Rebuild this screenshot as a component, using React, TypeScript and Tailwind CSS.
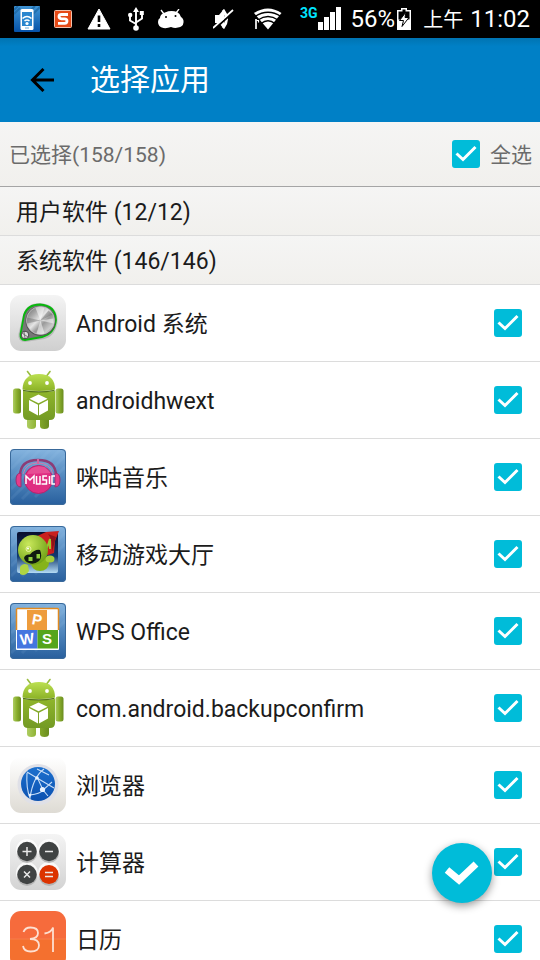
import React, { useState } from "react";

const FONT = "font-['Roboto','Noto_Sans_CJK_SC',sans-serif]";

function CheckBox({ checked, onChange, label, id }: { checked: boolean; onChange: () => void; label?: string; id: string }) {
  return (
    <span className="relative block h-7 w-7 shrink-0">
      <input
        id={id}
        type="checkbox"
        aria-label={label}
        checked={checked}
        onChange={onChange}
        className="block h-7 w-7 appearance-none rounded-[3px] border-2 border-[#757575] checked:border-[#00bcd9] checked:bg-[#00bcd9]"
      />
      {checked && (
        <svg viewBox="0 0 28 28" className="pointer-events-none absolute inset-0 h-7 w-7" fill="none" stroke="#fff" strokeWidth="3">
          <path d="M4.5 13.5 11 19.5 23.5 7" />
        </svg>
      )}
    </span>
  );
}

function StatusBar() {
  return (
    <div className="flex h-[38px] shrink-0 items-center bg-black pl-[14px] pr-[10px] text-white">
      <svg className="h-[26px] w-[26px]" viewBox="0 0 26 26">
        <defs>
          <linearGradient id="sb" x1="0" y1="0" x2="0" y2="1">
            <stop offset="0" stopColor="#3f94d4" />
            <stop offset="1" stopColor="#0552a8" />
          </linearGradient>
        </defs>
        <rect width="26" height="26" rx="1" fill="url(#sb)" />
        <path d="M0 8 6 2M0 4 4 0M16 5 21 0M19 8 26 1" stroke="#236fad" strokeWidth="2" />
        <rect x="6.500" y="3" width="13" height="21" rx="1.500" fill="#fff" />
        <rect x="8" y="6" width="10" height="14" fill="#2a86ce" />
        <path d="M8.500 12.500q4.500-4 9 0M10.500 15q2.500-2 5 0" fill="none" stroke="#fff" strokeWidth="1.600" />
        <circle cx="13" cy="17.500" r="1.600" fill="#fff" />
        <path d="M11 22h4" stroke="#6ba9d8" />
      </svg>
      <svg className="ml-[14px] h-[18px] w-[18px]" viewBox="0 0 18 18">
        <rect x=".5" y=".5" width="17" height="17" rx="1" fill="#e64a16" stroke="#f1c1ad" />
        <path d="M14 4.500H7.500Q5 4.500 5 6.500T7.500 8.800h3Q13 8.800 13 11T10.500 13.300H4" fill="none" stroke="#fff" strokeWidth="2.800" />
      </svg>
      <svg className="ml-[15px] h-[22px] w-[24px]" viewBox="0 0 24 22">
        <path d="M12 1 23 21H1Z" fill="#fff" stroke="#fff" strokeLinejoin="round" />
        <path d="M12 7.500v6.500M12 16v3" stroke="#000" strokeWidth="2.600" />
      </svg>
      <svg className="ml-[17px] h-[24px] w-[16px]" viewBox="0 0 16 24" fill="#fff">
        <path d="M8 4v16M8 17 2 13.500V9M8 15.500l6-4V7" fill="none" stroke="#fff" strokeWidth="1.900" />
        <path d="m8 0 3 5H5ZM11.800 4h4v4h-4Z" />
        <circle cx="2.200" cy="8" r="2.200" />
        <circle cx="8" cy="21" r="2.800" />
      </svg>
      <svg className="ml-[14px] h-[20px] w-[26px]" viewBox="0 0 26 20">
        <path d="M2 9Q2 5 7 3.500Q13 1 19 3Q22 4.500 23 8Q26 10 25.500 13.500Q25 18 20 18.500Q17 19.500 13 18Q9 19.500 5.500 19Q0 18 0 13Q0 10 2 9Z" fill="#fff" />
        <path d="m3 1 3 4M21 0l-3 4" stroke="#fff" strokeWidth="1.300" />
        <circle cx="8" cy="8" r="1" />
        <circle cx="17.500" cy="7" r="1" />
      </svg>
      <svg className="ml-[29px] h-[22px] w-[22px]" viewBox="0 0 22 22">
        <path d="M2 7h4l5-6v20l-5-6H2Z" fill="#fff" />
        <path d="M10 2q7 9 0 18" fill="none" stroke="#fff" strokeWidth="3" />
        <path d="M1 21.500 21 3.500" stroke="#000" strokeWidth="2" />
        <path d="M0 20 20 2" stroke="#fff" strokeWidth="1.700" />
      </svg>
      <svg className="ml-[19px] h-[22px] w-[28px]" viewBox="0 0 28 22" fill="none">
        <path d="M0 5Q14-4 27.500 5L14 21.500Z" fill="#fff" />
        <path d="M1 8.500Q14 0 27 8.500M4 12Q14 5 24 12M7 15.500Q14 10 21 15.500" stroke="#000" strokeWidth="1.400" />
        <path d="M2 11v10" stroke="#fff" strokeWidth="1.700" />
        <path d="M2.500 12.500h2v2" stroke="#fff" strokeWidth="1.200" />
      </svg>
      <span className="ml-[18px] self-start pt-[5px] text-sm leading-4 font-bold text-[#00e5ff]">3G</span>
      <svg className="h-[24px] w-[24px]" viewBox="0 0 24 24" fill="#fff">
        <path d="M0 15h5v8H0ZM6 10h5v13H6ZM12 5h5v18h-5ZM18 0h5v23h-5Z" />
      </svg>
      <span className="ml-[9px] text-2xl">56%</span>
      <svg className="ml-[2px] h-[22px] w-[14px]" viewBox="0 0 14 22">
        <path d="M4 0h6v2h4v20H0V2h4Z" fill="#fff" />
        <path d="M5.500 1.500h3v2h4v8H1.500v-8h4Z" fill="#000" />
        <path d="M9 4 2.500 12.500h4L5 18.500l7-9H8Z" fill="#fff" stroke="#000" strokeWidth="1" />
      </svg>
      <span className="ml-auto flex items-center gap-[7px]">
        <span className="pt-[2px] text-xl">上午</span>
        <span className="text-2xl">11:02</span>
      </span>
    </div>
  );
}

function SystemIcon() {
  return (
    <svg viewBox="0 0 56 56" className="h-14 w-14">
      <defs>
        <linearGradient id="sys" x1="0" y1="0" x2="0" y2="1">
          <stop offset="0" stopColor="#f4f4f4" />
          <stop offset="1" stopColor="#cfcfcf" />
        </linearGradient>
        <linearGradient id="dial" x1="0" y1="0" x2="1" y2="1">
          <stop offset="0" stopColor="#666" />
          <stop offset=".25" stopColor="#a5a5a5" />
          <stop offset=".45" stopColor="#e5e5e5" />
          <stop offset=".6" stopColor="#999" />
          <stop offset=".8" stopColor="#ccc" />
          <stop offset="1" stopColor="#555" />
        </linearGradient>
      </defs>
      <rect width="56" height="56" rx="11" fill="url(#sys)" />
      <path d="M14.500 20Q18 9.500 30 9.500Q47 11 46 28Q43 42 31 43L15 45.500Q9 45.500 10 39Z" fill="#777" stroke="#999" strokeWidth="3" opacity=".5" />
      <path d="M14 20Q17.500 9.500 30 9.500Q45.500 10.500 46 25Q44.500 39 32 42L15 45Q10 45 10.500 39Z" fill="#777" stroke="#08b80d" strokeWidth="1.800" />
      <circle cx="30.500" cy="26" r="15" fill="#555" />
      <circle cx="30.500" cy="25.500" r="14" fill="url(#dial)" stroke="#ccc" strokeWidth=".7" />
      <path d="m30.500 25.500-5-12.500q5-2 9 0ZM30.500 25.500l13-2v5ZM30.500 25.500l-4 13q4 1 8 0Z" fill="#fff" opacity=".5" />
      <path d="m30.500 25.500-13.500-3v6ZM30.500 25.500l8-10 4 4Z" fill="#555" opacity=".35" />
      <circle cx="15" cy="40" r="3.800" fill="#ddd" stroke="#444" />
      <path d="m12 38 6 4m-4-5 1 6" stroke="#777" />
    </svg>
  );
}

function DroidIcon() {
  return (
    <svg viewBox="0 0 56 62" className="h-[62px] w-14">
      <defs>
        <linearGradient id="droidHead" x1="0" y1="0" x2="0" y2="1">
          <stop offset="0" stopColor="#bce052" />
          <stop offset="1" stopColor="#8bb226" />
        </linearGradient>
        <linearGradient id="droidBody" x1="0" y1="0" x2="0" y2="1">
          <stop offset="0" stopColor="#8fb52b" />
          <stop offset="1" stopColor="#739a24" />
        </linearGradient>
        <linearGradient id="droidArm" x1="0" y1="0" x2="1" y2="0">
          <stop offset="0" stopColor="#aecd62" />
          <stop offset=".5" stopColor="#88ad2b" />
          <stop offset="1" stopColor="#6a8c20" />
        </linearGradient>
      </defs>
      <path d="m17.500 2.500 4.500 6M40 2.500l-4.500 6" stroke="#99bd3e" strokeWidth="1.600" strokeLinecap="round" />
      <path d="M17 46h9v11q0 3-4.500 3T17 57ZM30 46h9v11q0 3-4.500 3T30 57Z" fill="url(#droidArm)" />
      <rect x="3" y="19.500" width="8" height="25" rx="2.500" fill="url(#droidArm)" />
      <rect x="45.500" y="19.500" width="8" height="25" rx="2.500" fill="url(#droidArm)" />
      <path d="M13 22q16 2 32 0v24q0 5-5 5H18q-5 0-5-5Z" fill="url(#droidBody)" />
      <path d="M12.500 20.500Q13 5 29 5t16 15.500q-16 3-32.500 0Z" fill="url(#droidHead)" />
      <path d="M13 20.700q16 3.300 31.500 0v1.300q-16 3-31.500 0Z" fill="#55751a" />
      <circle cx="20" cy="14" r="1.900" fill="#fff" />
      <circle cx="37" cy="14" r="1.900" fill="#fff" />
      <path d="m28.500 25.500 9 4.200-9 4.600-9-4.600ZM19 31l9 4.700v10.800l-9-5ZM38 31l-9 4.700v10.800l9-5Z" fill="#fff" />
    </svg>
  );
}

function BlueTile({ children }: { children: React.ReactNode }) {
  return (
    <svg viewBox="0 0 56 56" className="h-14 w-14">
      <defs>
        <linearGradient id="tile" x1="0" y1="0" x2="0" y2="1">
          <stop offset="0" stopColor="#85b4df" />
          <stop offset=".5" stopColor="#5288be" />
          <stop offset="1" stopColor="#285f9d" />
        </linearGradient>
      </defs>
      <rect width="56" height="56" rx="4" fill="url(#tile)" />
      <path d="M1 20 20 1M1 30 30 1M1 40 40 1M1 50 50 1M12 50 55 7M25 48 55 18" stroke="#a9ceed" strokeWidth="3" opacity=".1" />
      <rect x=".5" y=".5" width="55" height="55" rx="3.500" fill="none" stroke="#39699a" />
      {children}
    </svg>
  );
}

function MusicIcon() {
  return (
    <BlueTile>
      <path d="M10 27Q10 11 28 11t18 16" fill="none" stroke="#8c3c76" strokeWidth="2.500" />
      <path d="M13 25Q16 14 28 14t15 11" fill="none" stroke="#cf7aac" strokeWidth="1" />
      <path d="M28 10v5" stroke="#d5659f" strokeWidth="2" />
      <circle cx="28.500" cy="30.500" r="14" fill="#df2e82" stroke="#b12470" />
      <path d="M17 25q5-10 18-7l6 6Z" fill="#ec64a2" opacity=".6" />
      <path d="M11 24v14q-5 0-5-7t5-7ZM45 24v14q5 0 5-7t-5-7Z" fill="#e53c8a" stroke="#a32c70" />
      <path d="M16 35v-8l4 4 4-4v8M26.500 27v8H30v-8M37 27h-4v4h3.500v4h-5M39.500 27v8M45 27h-3v8h3" fill="none" stroke="#fff" strokeWidth="1.500" />
    </BlueTile>
  );
}

function GameIcon() {
  return (
    <BlueTile>
      <defs>
        <linearGradient id="night" x1="0" y1="0" x2="0" y2="1">
          <stop offset="0" stopColor="#080e2d" />
          <stop offset=".6" stopColor="#123a70" />
          <stop offset="1" stopColor="#b4dcf5" />
        </linearGradient>
        <radialGradient id="alien" cx=".35" cy=".3" r=".8">
          <stop offset="0" stopColor="#c9e85b" />
          <stop offset="1" stopColor="#6a9d12" />
        </radialGradient>
      </defs>
      <rect x="7" y="6" width="41" height="41" rx="2" fill="url(#night)" />
      <path d="m25 11 11-5 13-1-4 10-1 12-9 3-3-12Z" fill="#c9201e" />
      <path d="M38 8q5 6 4 18l4-15Z" fill="#8d1318" />
      <path d="m37 22 3-9v10" fill="none" stroke="#9bc831" strokeWidth="2" />
      <ellipse cx="30" cy="37" rx="9" ry="8" fill="#86b31b" />
      <ellipse cx="40" cy="33" rx="4.500" ry="3.500" fill="#a5ce3a" />
      <circle cx="23" cy="24" r="15" fill="url(#alien)" />
      <path d="M14 32q1-4 6-3.500 5-5.500 10-4.500 3 7-1 11-5 4-10 2-4-1-5-5Z" fill="#101b10" />
      <path d="M18.500 31h4v4h-4ZM26.500 28h3.500v4.500h-3.500Z" fill="#8fd03e" />
      <circle cx="18.500" cy="23" r="2.500" fill="none" stroke="#e9f5a4" />
      <circle cx="18" cy="22.500" r="1" fill="#fff" />
      <path d="M10 41q3-5 8-2l1 6q-4 6-9 3Z" fill="#afd543" />
    </BlueTile>
  );
}

function WpsIcon() {
  return (
    <BlueTile>
      <rect x="6" y="5" width="43" height="42" rx="1" fill="#fff" />
      <path d="M6.500 27V6.500q0-1 1-1h40q1 0 1 1V27" fill="none" stroke="#e18a20" strokeWidth="1.500" />
      <rect x="17" y="7" width="20" height="20" fill="#ee9c3c" />
      <rect x="7" y="27" width="20.500" height="18.500" fill="#4476df" />
      <rect x="27.500" y="27" width="20.500" height="18.500" fill="#55a51c" />
      <g fill="#fff" fontFamily="Liberation Sans, sans-serif" fontWeight="bold" fontSize="15" textAnchor="middle">
        <text x="27" y="22" transform="rotate(10 27 17)">P</text>
        <text x="17" y="41" transform="rotate(-8 17 36)">W</text>
        <text x="37" y="41">S</text>
      </g>
    </BlueTile>
  );
}

function BrowserIcon() {
  return (
    <svg viewBox="0 0 56 56" className="h-14 w-14">
      <defs>
        <linearGradient id="brBase" x1="0" y1="0" x2="0" y2="1">
          <stop offset="0" stopColor="#fff" />
          <stop offset="1" stopColor="#dedbd4" />
        </linearGradient>
        <linearGradient id="globe" x1="0" y1="0" x2="0" y2="1">
          <stop offset="0" stopColor="#1c70ce" />
          <stop offset="1" stopColor="#0b51b0" />
        </linearGradient>
      </defs>
      <rect width="56" height="56" rx="11" fill="url(#brBase)" />
      <circle cx="28" cy="27.500" r="20.500" fill="#dfe0e7" />
      <circle cx="28" cy="27" r="17" fill="url(#globe)" />
      <path d="M17 15 27 21 44 31M34 12Q23 20 20 41Q16 31 17 16M20 38q10-1 13-5l9-8M28 22l5 11 5 6M27 12l12 6" fill="none" stroke="#c7ddf7" strokeWidth="1.100" />
      <circle cx="32.500" cy="32.500" r="2.600" fill="#e8f2ff" />
      <circle cx="27" cy="21" r="1.800" fill="#e8f2ff" />
      <circle cx="20" cy="38" r="1.300" fill="#e8f2ff" />
    </svg>
  );
}

function CalculatorIcon() {
  return (
    <svg viewBox="0 0 56 56" className="h-14 w-14">
      <defs>
        <linearGradient id="calc" x1="0" y1="0" x2="0" y2="1">
          <stop offset="0" stopColor="#f4f4f4" />
          <stop offset="1" stopColor="#d3d3d3" />
        </linearGradient>
      </defs>
      <rect width="56" height="56" rx="11" fill="url(#calc)" />
      <g fill="#fff" opacity=".8">
        <circle cx="17" cy="16" r="11" />
        <circle cx="39" cy="16" r="11" />
        <circle cx="17" cy="39" r="11" />
        <circle cx="39" cy="39" r="11" />
      </g>
      <g fill="#b5b5b5">
        <circle cx="17" cy="19" r="10" />
        <circle cx="39" cy="19" r="10" />
        <circle cx="17" cy="42" r="10" />
        <circle cx="39" cy="42" r="10" />
      </g>
      <g fill="#404343">
        <circle cx="17" cy="17.500" r="9.700" />
        <circle cx="39" cy="17.500" r="9.700" />
        <circle cx="17" cy="40.500" r="9.700" />
      </g>
      <circle cx="39" cy="40.500" r="9.500" fill="#dc3300" />
      <path d="M12.500 17.500h9M17 13v9M35 17.500h8M14 37.500l6 6m0-6-6 6M35 38.500h8M35 42.500h8" stroke="#e9e9e9" strokeWidth="1.500" />
    </svg>
  );
}

function CalendarIcon() {
  return (
    <svg viewBox="0 0 56 56" className="h-14 w-14">
      <rect width="56" height="56" rx="11" fill="#f66b3c" />
      <path d="M0 28h56v17q0 11-11 11H11Q0 56 0 45Z" fill="#f4702f" />
      <path d="M0 28h56" stroke="#f77c4a" />
      <path d="M13.500 21Q15 16.500 20.500 16.500q7.500 0 7.500 5.500t-8 6q9 0 9 6.300T20.500 40.500q-6.500 0-7.500-5.500M34.500 22.500q7-1 8.500-6v24.500" fill="none" stroke="#fde0d2" strokeWidth="1.800" />
    </svg>
  );
}

const APPS = [
  { name: "Android 系统", icon: <SystemIcon /> },
  { name: "androidhwext", icon: <DroidIcon /> },
  { name: "咪咕音乐", icon: <MusicIcon /> },
  { name: "移动游戏大厅", icon: <GameIcon /> },
  { name: "WPS Office", icon: <WpsIcon /> },
  { name: "com.android.backupconfirm", icon: <DroidIcon /> },
  { name: "浏览器", icon: <BrowserIcon /> },
  { name: "计算器", icon: <CalculatorIcon /> },
  { name: "日历", icon: <CalendarIcon /> },
];

const GROUPS = ["用户软件 (12/12)", "系统软件 (146/146)"];

export default function App() {
  const [picked, setPicked] = useState(APPS.map(() => true));
  const all = picked.every(Boolean);
  return (
    <div className={`relative flex h-screen flex-col overflow-hidden bg-white text-[#1b1b1b] ${FONT}`}>
      <StatusBar />
      <header className="flex h-[84px] shrink-0 items-center bg-linear-to-b from-[#0074b2] to-[#0080c6] to-10% pl-[30px] text-white">
        <button type="button" aria-label="返回" className="h-6 w-6">
          <svg viewBox="0 0 24 24" className="h-6 w-6" fill="none" stroke="#000" strokeWidth="3">
            <path d="M24 12H2.500M13.500 1 2.500 12l11 11" />
          </svg>
        </button>
        <h1 className="ml-9 text-3xl">选择应用</h1>
      </header>
      <div className="flex h-[65px] shrink-0 items-center justify-between border-b border-[#a5a5a5] bg-linear-to-b from-[#f5f5f4] to-[#f1f0ed] pr-2 pl-[9px] text-[21px] text-[#6b6b6b]">
        <span className="pt-1">已选择(158/158)</span>
        <label htmlFor="all" className="flex items-center gap-[10px]">
          <CheckBox id="all" checked={all} onChange={() => setPicked(picked.map(() => !all))} />
          <span className="pt-1">全选</span>
        </label>
      </div>
      {GROUPS.map((g) => (
        <button
          key={g}
          type="button"
          className="flex h-[49px] shrink-0 items-center border-b border-[#dcdcdc] bg-linear-to-b from-[#f5f5f4] to-[#f1f0ed] pt-1 pl-4 text-left text-[23px]"
        >
          {g}
        </button>
      ))}
      <ul className="min-h-0 flex-1 overflow-hidden">
        {APPS.map((app, i) => (
          <li key={app.name} className="flex h-[77px] items-center border-b border-[#dcdcdc] pr-[18px] pl-[10px]">
            <label htmlFor={`app-${i}`} className="flex flex-1 items-center gap-[10px] text-[23px]">
              {app.icon}
              <span className="pt-1">{app.name}</span>
            </label>
            <CheckBox id={`app-${i}`} checked={picked[i]} onChange={() => setPicked(picked.map((p, j) => (j === i ? !p : p)))} />
          </li>
        ))}
      </ul>
      <button
        type="button"
        aria-label="确定"
        className="absolute right-12 bottom-[57px] flex h-[60px] w-[60px] items-center justify-center rounded-full bg-[#00bcd9] shadow-[0_3px_9px_rgba(0,0,0,0.4)]"
      >
        <svg viewBox="0 0 36 28" className="h-7 w-9" fill="none" stroke="#fff" strokeWidth="7">
          <path d="m3 11 12 10L32 5" />
        </svg>
      </button>
    </div>
  );
}
